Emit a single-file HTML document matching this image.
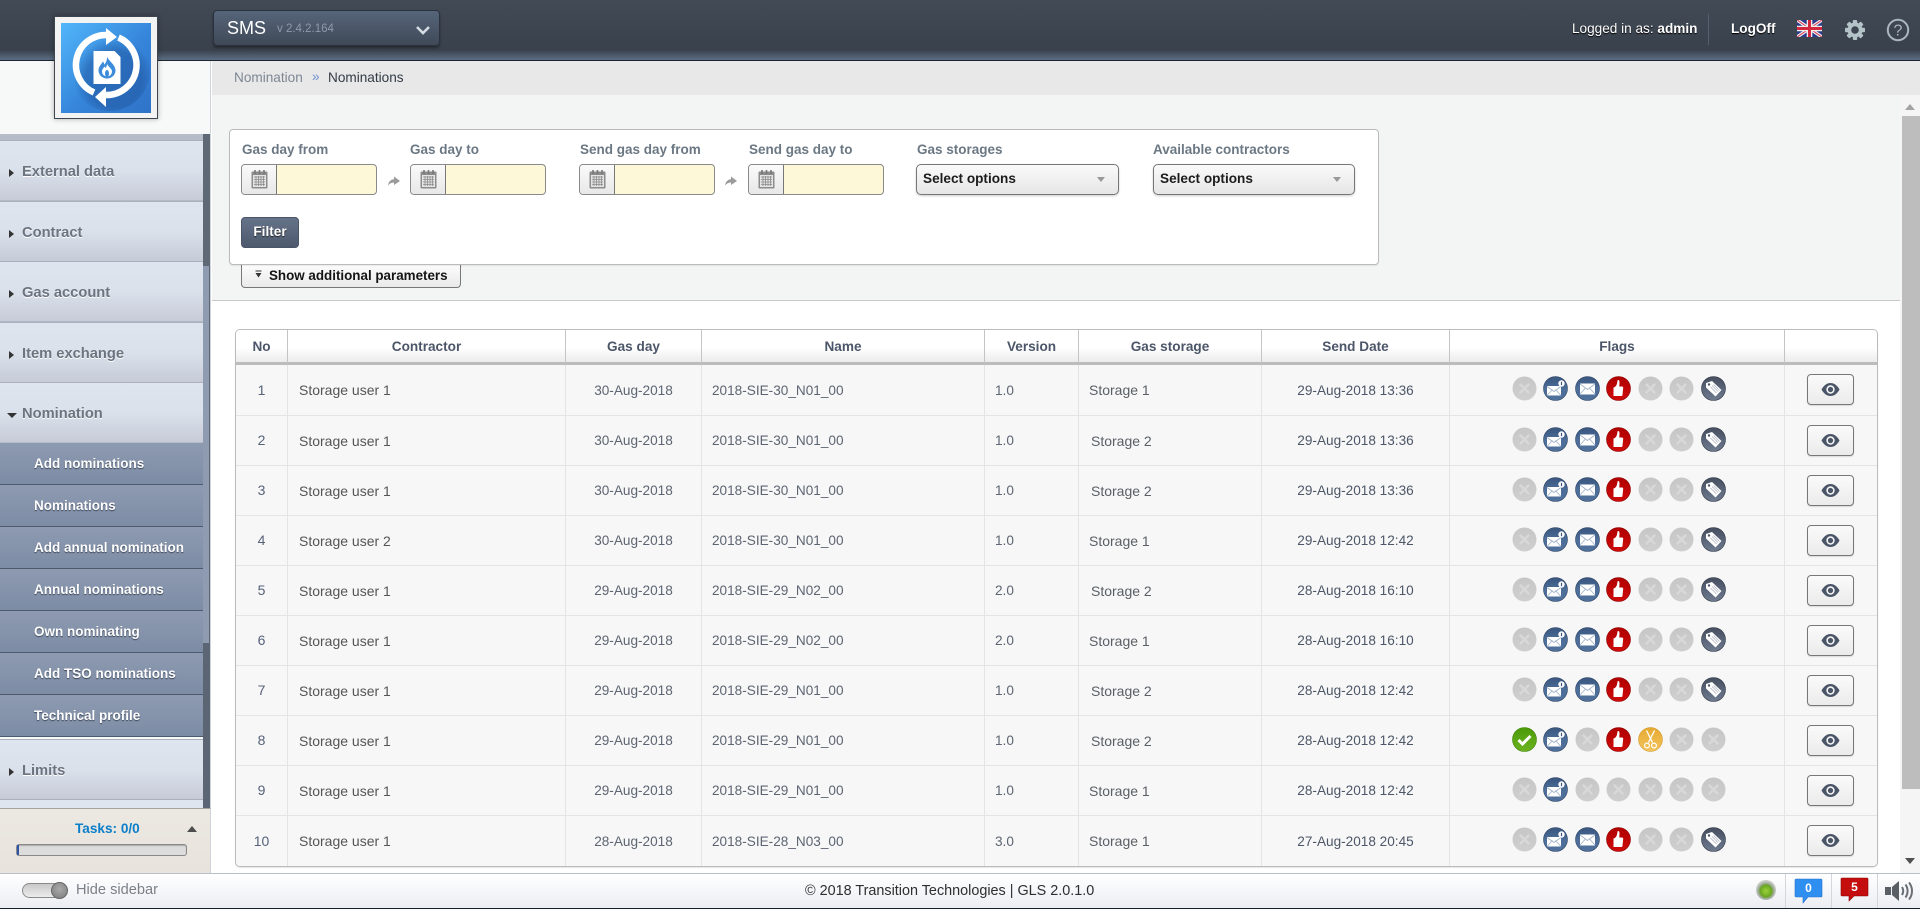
<!DOCTYPE html>
<html lang="en">
<head>
<meta charset="utf-8">
<title>SMS - Nominations</title>
<style>
*{box-sizing:border-box}
html,body{margin:0;padding:0;width:1920px;height:909px;overflow:hidden;background:#fff;font-family:"Liberation Sans",Arial,sans-serif;color:#555}
.a{position:absolute}
#hdr{left:0;top:0;width:1920px;height:61px;background:linear-gradient(#424a56 0,#39414c 50px,#5c6e84 60px,#5c6e84 60px);border-bottom:1px solid #1c2430}
#logo{left:54px;top:16px;width:104px;height:103px;background:#f3f3f3;border:1px solid #3d4551;box-shadow:0 0 5px rgba(0,0,0,.3);z-index:5}
#logo svg{position:absolute;left:6px;top:6px}
#sms{left:213px;top:10px;width:227px;height:36px;border-radius:4px;background:linear-gradient(#56657a,#3f4957);border:1px solid #2b323d;box-shadow:0 2px 2px rgba(0,0,0,.35)}
#sms b{position:absolute;left:13px;top:6px;font-weight:normal;font-size:18px;color:#fff;line-height:22px}
#sms i{position:absolute;left:63px;top:11px;font-style:normal;font-size:11.5px;color:#8e9aab;line-height:14px;white-space:nowrap}
.hw{color:#fff;font-size:13.6px;line-height:18px;white-space:nowrap;text-shadow:0 1px 1px #000}
#side{left:0;top:61px;width:211px;height:812px;background:#f7f8f8;border-right:1px solid #cfd4da}
#mtop{left:0;top:134px;width:203px;height:6px;background:#b6bdc9}
.m{position:absolute;left:0;width:203px;height:61px;background:linear-gradient(#dfe5ee 0,#dbe1eb 50%,#c6cbd7 100%);border-top:1px solid #aab1bd;border-bottom:1px solid #b5bbc6;font-weight:bold;font-size:14.7px;color:#6c7480;line-height:62px;padding-left:22px;text-shadow:0 1px 0 #fff}
.m:before{content:"";position:absolute;left:9px;top:28px;border-left:5px solid #333;border-top:4px solid transparent;border-bottom:4px solid transparent}
.m.o:before{left:7px;top:30px;border-top:5px solid #333;border-left:5px solid transparent;border-right:5px solid transparent;border-bottom:0}
.s{position:absolute;left:0;width:203px;height:42px;background:linear-gradient(#8d9ab1,#7d8ca5);border-bottom:1px solid #4d596d;color:#fff;font-weight:bold;font-size:13.5px;line-height:42px;padding-left:34px;text-shadow:0 1px 1px #3c4656;white-space:nowrap}
#sb1{left:203px;top:134px;width:7px;height:132px;background:#5f6875}
#sb2{left:203px;top:266px;width:7px;height:377px;background:#8f9bb0;border-right:1px solid #5d6674}
#sb3{left:203px;top:643px;width:7px;height:165px;background:#5b6573}
#tasks{left:0;top:808px;width:211px;height:65px;background:linear-gradient(#ece8e2,#e8e3dc);border-top:1px solid #a9a39b;border-right:1px solid #cfd4da}
#tasks b{position:absolute;left:75px;top:12px;font-size:13.6px;color:#0b7fc9;line-height:16px}
#tasks u{position:absolute;left:187px;top:17px;border-bottom:6px solid #4d4d4d;border-left:5px solid transparent;border-right:5px solid transparent}
#prog{position:absolute;left:16px;top:35px;width:171px;height:12px;background:#dcdcdc;border:1px solid #8b8985;border-radius:3px;box-shadow:inset 0 1px 1px #aaa}
#prog i{position:absolute;left:0;top:0;width:2px;height:10px;background:#2f55a8}
#bc{left:212px;top:61px;width:1708px;height:34px;background:#e8e8e8;font-size:13.6px;line-height:33px}
#main1{left:212px;top:95px;width:1688px;height:205px;background:#f3f5f4;border-bottom:0}
#line{left:212px;top:300px;width:1688px;height:1px;background:#c8c8c8}
#main2{left:212px;top:301px;width:1688px;height:572px;background:#fff}
#scr{left:1900px;top:95px;width:20px;height:778px;background:#f5f5f5}
#thumb{left:1902px;top:116px;width:18px;height:673px;background:#bdbdbd}
#panel{left:229px;top:129px;width:1150px;height:136px;background:#fff;border:1px solid #bbb;border-radius:4px;z-index:2;box-shadow:0 1px 1px rgba(0,0,0,.08)}
.lb{position:absolute;top:141px;font-weight:bold;font-size:13.5px;line-height:18px;color:#6b7883;white-space:nowrap;z-index:3}
.dt{position:absolute;top:164px;height:31px;background:#fdf8d8;border:1px solid #8a8a8a;border-radius:4px;z-index:3;overflow:hidden}
.dt span{position:absolute;left:0;top:0;width:35px;height:29px;background:linear-gradient(#fafafa,#e8e8e8);border-right:1px solid #777}
.dt svg{position:absolute;left:9px;top:4px}
.ar{position:absolute;top:176px;z-index:3}
.sel{position:absolute;top:164px;height:31px;border:1px solid #777;border-radius:5px;background:linear-gradient(#fafafa,#e6e6e6);font-weight:bold;font-size:13.6px;color:#1c1c1c;line-height:27px;padding-left:6px;z-index:3;box-shadow:0 1px 2px rgba(0,0,0,.2)}
.sel:after{content:"";position:absolute;right:13px;top:12px;border-top:5px solid #999;border-left:4.5px solid transparent;border-right:4.5px solid transparent}
#flt{left:241px;top:217px;width:58px;height:31px;border-radius:4px;background:linear-gradient(#657389,#4d596d);border:1px solid #4a5568;color:#fff;font-weight:bold;font-size:13.6px;line-height:27px;text-align:center;z-index:3;text-shadow:0 1px 1px #222}
#more{left:241px;top:264px;width:220px;height:24px;background:linear-gradient(#fdfdfd,#eaeaea);border:1px solid #777;border-top:0;border-radius:0 0 4px 4px;font-weight:bold;font-size:13.4px;color:#151515;line-height:23px;padding-left:27px;white-space:nowrap;z-index:1}
#more svg{position:absolute;left:12px;top:6px}
#tw{left:235px;top:329px;width:1643px;height:538px;border:1px solid #bbb;border-radius:5px;overflow:hidden;background:#f7f7f7;box-shadow:0 1px 1px rgba(0,0,0,.1)}
table{border-collapse:separate;border-spacing:0;table-layout:fixed;width:1641px}
th{height:35px;padding:0;background:linear-gradient(#fff 0,#fff 55%,#ececec 100%);border-right:1px solid #c4c4c4;border-bottom:3px solid #bcbcbc;font-size:13.6px;font-weight:bold;color:#4c5669;text-align:center}
td{height:50px;padding:0;background:#f7f7f7;border-right:1px solid #e4e4e4;border-bottom:1px solid #e4e4e4;font-size:13.6px;color:#5d6572;position:relative;white-space:nowrap}
tr.r1 td{height:51px}
tr:last-child td{border-bottom:0}
th:last-child,td:last-child{border-right:0}
.c{text-align:center}
.no{text-align:center;font-size:14px;color:#56627a;padding-bottom:1px}
.cn{padding-left:11px;font-size:14px;color:#555}
.p{padding-left:10px}
.st{padding-left:10px;font-size:14px;color:#5a5f66}
.st2{padding-left:12px}
.sd{text-align:center;color:#4d5768}
.f{position:absolute;top:11px;width:25px;height:25px}
.f1{left:61.5px}.f2{left:93px}.f3{left:125px}.f4{left:156px}.f5{left:187.5px}.f6{left:218.5px}.f7{left:250.5px}
.eye{position:absolute;left:22px;top:9px;width:47px;height:31px;border:1px solid #777;border-radius:4px;background:linear-gradient(#fafafa,#ebebeb);box-shadow:0 1px 1px rgba(0,0,0,.12)}
.eye svg{position:absolute;left:13px;top:7px}
#ftr{left:0;top:873px;width:1920px;height:36px;background:linear-gradient(#fff,#eceef3);border-top:1px solid #b7bfca;border-bottom:1px solid #14202a}
#tog{position:absolute;left:22px;top:9px;width:45px;height:15px;border-radius:8px;background:linear-gradient(#c9c9c9,#ececec);border:1px solid #8a8a8a}
#tog i{position:absolute;right:-2px;top:-2px;width:17px;height:17px;border-radius:50%;background:radial-gradient(circle at 50% 40%,#a9a9a9,#7c7c7c);border:1px solid #666}
#hs{position:absolute;left:76px;top:7px;font-size:14.6px;line-height:18px;color:#7b8088}
#cp{position:absolute;left:805px;top:8px;font-size:14.4px;line-height:18px;color:#2f2f2f;white-space:nowrap}
.dv{position:absolute;top:0;width:1px;height:34px;background:#d3d6db}
</style>
</head>
<body>
<svg width="0" height="0" style="position:absolute">
<defs>
<linearGradient id="gg" x1="0" y1="0" x2="0" y2="1"><stop offset="0" stop-color="#c6c6c6"/><stop offset="1" stop-color="#cfcfcf"/></linearGradient>
<linearGradient id="gb" x1="0" y1="0" x2="0" y2="1"><stop offset="0" stop-color="#38557d"/><stop offset=".5" stop-color="#4c6d98"/><stop offset="1" stop-color="#4f719c"/></linearGradient>
<linearGradient id="gr" x1="0" y1="0" x2="0" y2="1"><stop offset="0" stop-color="#b00000"/><stop offset="1" stop-color="#cf0b0b"/></linearGradient>
<linearGradient id="gt" x1="0" y1="0" x2="0" y2="1"><stop offset="0" stop-color="#454e5f"/><stop offset="1" stop-color="#6f7b90"/></linearGradient>
<linearGradient id="gv" x1="0" y1="0" x2="0" y2="1"><stop offset="0" stop-color="#4b9a08"/><stop offset="1" stop-color="#6cb321"/></linearGradient>
<linearGradient id="gy" x1="0" y1="0" x2="0" y2="1"><stop offset="0" stop-color="#e6a92f"/><stop offset="1" stop-color="#f3c45e"/></linearGradient>
<symbol id="g" viewBox="0 0 25 25"><circle cx="12.5" cy="12.5" r="12" fill="url(#gg)"/><path d="M8.500 8.500l8 8M16.500 8.500l-8 8" stroke="#d8d8d8" stroke-width="2.400" stroke-linecap="round"/></symbol>
<symbol id="mi" viewBox="0 0 25 25"><circle cx="12.5" cy="12.5" r="12" fill="url(#gb)" stroke="#2f4666" stroke-width=".6"/><rect x="4" y="10" width="14" height="9.500" fill="#fff"/><path d="M4 10.500l7 5 7-5M4 19.500l5.500-6M18 19.500l-5.500-6" fill="none" stroke="#9db0c8" stroke-width=".8"/><circle cx="18.500" cy="7.500" r="3.200" fill="#fff"/><path d="M18.500 5.800v3.400" stroke="#3b5680" stroke-width="1.200"/></symbol>
<symbol id="m" viewBox="0 0 25 25"><circle cx="12.5" cy="12.5" r="12" fill="url(#gb)" stroke="#2f4666" stroke-width=".6"/><rect x="5" y="7.500" width="15" height="11" fill="#fff"/><path d="M5 8l7.500 5.500L20 8M5 18l5.500-6M20 18l-5.500-6" fill="none" stroke="#9db0c8" stroke-width=".8"/></symbol>
<symbol id="r" viewBox="0 0 25 25"><circle cx="12.5" cy="12.5" r="12" fill="url(#gr)" stroke="#8c0000" stroke-width=".6"/><path d="M7.500 11.500c2-.5 3-2 3.500-4l.7-3.500c1.200-.3 1.800.8 1.800 2l-.2 4.500h2.700c.8 0 1.200.5 1.200 1.300l-.7 7c-.1.900-.5 1.200-1.300 1.200h-7.700z" fill="#fff"/></symbol>
<symbol id="t" viewBox="0 0 25 25"><circle cx="12.5" cy="12.5" r="12" fill="url(#gt)" stroke="#2e3542" stroke-width=".6"/><path d="M5 7l6-2 9.500 9-6 6.500-9.500-9z" fill="#fff"/><circle cx="8" cy="8.500" r="1.200" fill="#4a5568"/><path d="M11 9.500l6 6M9.500 11l6 6M12.500 8.500l6 6" stroke="#b0b6c0" stroke-width=".8"/></symbol>
<symbol id="v" viewBox="0 0 25 25"><circle cx="12.5" cy="12.5" r="12" fill="url(#gv)" stroke="#3f8205" stroke-width=".6"/><path d="M6.500 13l4 4 8-8" fill="none" stroke="#fff" stroke-width="3"/></symbol>
<symbol id="y" viewBox="0 0 25 25"><circle cx="12.5" cy="12.5" r="12" fill="url(#gy)" stroke="#c88f22" stroke-width=".5"/><path d="M8.500 3.500l6 12M16.500 3.500l-6 12" stroke="#fff" stroke-width="1.300"/><circle cx="9" cy="18.500" r="2.400" fill="none" stroke="#fff" stroke-width="1.200"/><circle cx="16" cy="18.500" r="2.400" fill="none" stroke="#fff" stroke-width="1.200"/></symbol>
<symbol id="e" viewBox="0 0 19 15"><path d="M.5 7.500C3 3 6 1 9.500 1s6.500 2 9 6.500c-2.500 4.500-5.500 6.500-9 6.500S3 12 .5 7.500z" fill="#4b5568"/><circle cx="9.500" cy="7.500" r="4.200" fill="#f3f3f3"/><circle cx="9.500" cy="7.500" r="2.600" fill="#4b5568"/></symbol>
<symbol id="cal" viewBox="0 0 17 20"><rect x="0.500" y="2.500" width="16" height="17" rx="1" fill="#8c8c8c"/><rect x="2" y="6" width="13" height="12" fill="#e4e4e4"/><path d="M4 1v4M8.500 1v4M13 1v4" stroke="#777" stroke-width="1.600"/><path d="M3 8h11M3 10.500h11M3 13h11M3 15.500h11M5 7v10M7.500 7v10M10 7v10M12.500 7v10" stroke="#8a8a8a" stroke-width=".8"/></symbol>
<symbol id="arw" viewBox="0 0 12 10"><path d="M0 9.500C.5 6 2.500 3.500 6 3.300V.5L12 5 6 9V6.500C3.500 6.500 1.500 7.500 0 9.500z" fill="#9a9a9a"/></symbol>
</defs>
</svg>

<div class="a" id="hdr"></div>
<div class="a" id="sms"><b>SMS</b><i>v 2.4.2.164</i>
<svg class="a" style="left:201px;top:14px" width="16" height="11" viewBox="0 0 16 11"><path d="M2 2l6 6 6-6" fill="none" stroke="#d5dbe2" stroke-width="2.600"/></svg></div>
<div class="a hw" style="left:1572px;top:20px">Logged in as: <b>admin</b></div>
<div class="a" style="left:1708px;top:14px;width:1px;height:31px;background:#55606e"></div>
<div class="a hw" style="left:1731px;top:20px;font-weight:bold">LogOff</div>
<svg class="a" style="left:1797px;top:20px" width="25" height="17" viewBox="0 0 25 17"><rect width="25" height="17" fill="#2b3a8c"/><path d="M0 0l25 17M25 0L0 17" stroke="#eee" stroke-width="3.400"/><path d="M0 0l25 17M25 0L0 17" stroke="#d8425a" stroke-width="1.100"/><path d="M12.500 0v17M0 8.500h25" stroke="#eee" stroke-width="5.600"/><path d="M12.500 0v17M0 8.500h25" stroke="#d4283f" stroke-width="3"/></svg>
<svg class="a" style="left:1844px;top:19px" width="22" height="22" viewBox="0 0 22 22"><g fill="#b3c3c7"><circle cx="11" cy="11" r="7.500"/><rect x="8.800" y="1" width="4.400" height="20" rx="1"/><rect x="8.800" y="1" width="4.400" height="20" rx="1" transform="rotate(45 11 11)"/><rect x="8.800" y="1" width="4.400" height="20" rx="1" transform="rotate(90 11 11)"/><rect x="8.800" y="1" width="4.400" height="20" rx="1" transform="rotate(135 11 11)"/></g><circle cx="11" cy="11" r="3.800" fill="#3d4551"/></svg>
<svg class="a" style="left:1886px;top:18px" width="24" height="24" viewBox="0 0 24 24"><circle cx="12" cy="12" r="10.200" fill="none" stroke="#aab7bd" stroke-width="2"/><text x="12" y="17.500" text-anchor="middle" font-family="Liberation Sans" font-size="16" fill="#aab7bd">?</text></svg>

<div class="a" id="side"></div>
<div class="a" id="logo"><svg width="90" height="90" viewBox="0 0 90 90">
<defs><linearGradient id="lg" x1="0" y1="0" x2="1" y2="1"><stop offset="0" stop-color="#52b6fa"/><stop offset=".55" stop-color="#3585da"/><stop offset="1" stop-color="#2f73c8"/></linearGradient>
<radialGradient id="ls" cx=".55" cy=".6" r=".5"><stop offset=".7" stop-color="#1d4f96" stop-opacity=".45"/><stop offset="1" stop-color="#1d4f96" stop-opacity="0"/></radialGradient></defs>
<rect width="90" height="90" fill="url(#lg)"/><circle cx="49" cy="48" r="40" fill="url(#ls)"/>
<g fill="none" stroke="#fff" stroke-width="6.500"><path d="M33 69.500A30 30 0 0 1 46 12"/><path d="M57.500 14.500A30 30 0 0 1 45 72"/></g>
<path d="M45 5l11 9-11 8zM45 64L34 74l11 10z" fill="#fff"/>
<path d="M32.500 28h21l6 6v27h-27z" fill="#fff"/>
<path d="M46 33.500c1.500 4.500 8.500 8 8.500 14a8.500 8 0 0 1-17 0c0-4 3-6.500 4.500-9 .8 1 1.300 2 1.300 3.200 1.800-2 3-5 2.700-8.200z" fill="#3d8cdc"/>
<path d="M46 41c1 2.500 5 4.500 5 7.500a5 5 0 0 1-10 0c0-2 1.500-3.500 2.500-5 .5.500 1 1 1 1.800.8-1 1.500-2.800 1.500-4.300z" fill="#fff"/>
<ellipse cx="46" cy="50.500" rx="2" ry="3.500" fill="#3d8cdc"/>
</svg></div>

<div class="a" id="mtop"></div>
<div class="m" style="top:140px">External data</div>
<div class="m" style="top:201px">Contract</div>
<div class="m" style="top:261px">Gas account</div>
<div class="m" style="top:322px">Item exchange</div>
<div class="m o" style="top:382px">Nomination</div>
<div class="s" style="top:443px">Add nominations</div>
<div class="s" style="top:485px">Nominations</div>
<div class="s" style="top:527px">Add annual nomination</div>
<div class="s" style="top:569px">Annual nominations</div>
<div class="s" style="top:611px">Own nominating</div>
<div class="s" style="top:653px">Add TSO nominations</div>
<div class="s" style="top:695px">Technical profile</div>
<div class="m" style="top:739px">Limits</div>
<div class="m" style="top:799px;height:10px;background:#dfe5ee;line-height:0"></div>
<div class="a" id="sb1"></div><div class="a" id="sb2"></div><div class="a" id="sb3"></div>
<div class="a" id="tasks"><b>Tasks: 0/0</b><u></u><div id="prog"><i></i></div></div>

<div class="a" id="bc"><span style="position:absolute;left:22px;color:#7d8794">Nomination</span><span style="position:absolute;left:100px;top:-1px;color:#6f8fd0">»</span><span style="position:absolute;left:116px;color:#333c47">Nominations</span></div>
<div class="a" id="main1"></div>
<div class="a" id="line"></div>
<div class="a" id="main2"></div>
<div class="a" id="scr"></div><div class="a" id="thumb"></div>
<div class="a" style="left:1905px;top:104px;border-bottom:6px solid #a3a3a3;border-left:5px solid transparent;border-right:5px solid transparent"></div>
<div class="a" style="left:1905px;top:858px;border-top:6px solid #505050;border-left:5px solid transparent;border-right:5px solid transparent"></div>

<div class="a" id="panel"></div>
<div class="lb" style="left:242px">Gas day from</div>
<div class="lb" style="left:410px">Gas day to</div>
<div class="lb" style="left:580px">Send gas day from</div>
<div class="lb" style="left:749px">Send gas day to</div>
<div class="lb" style="left:917px">Gas storages</div>
<div class="lb" style="left:1153px">Available contractors</div>
<div class="dt" style="left:241px;width:136px"><span><svg width="17" height="20"><use href="#cal"/></svg></span></div>
<div class="dt" style="left:410px;width:136px"><span><svg width="17" height="20"><use href="#cal"/></svg></span></div>
<div class="dt" style="left:579px;width:136px"><span><svg width="17" height="20"><use href="#cal"/></svg></span></div>
<div class="dt" style="left:748px;width:136px"><span><svg width="17" height="20"><use href="#cal"/></svg></span></div>
<svg class="ar" style="left:388px" width="12" height="10"><use href="#arw"/></svg>
<svg class="ar" style="left:725px" width="12" height="10"><use href="#arw"/></svg>
<div class="sel" style="left:916px;width:203px">Select options</div>
<div class="sel" style="left:1153px;width:202px">Select options</div>
<div class="a" id="flt">Filter</div>
<div class="a" id="more"><svg width="9" height="9" viewBox="0 0 9 9"><path d="M1.500 .5h6v1h-6zM1.500 3h6L4.500 7.500z" fill="#333"/></svg>Show additional parameters</div>

<div class="a" id="tw"><table>
<colgroup><col style="width:52px"><col style="width:278px"><col style="width:136px"><col style="width:283px"><col style="width:94px"><col style="width:183px"><col style="width:188px"><col style="width:335px"><col style="width:92px"></colgroup>
<thead><tr><th>No</th><th>Contractor</th><th>Gas day</th><th>Name</th><th>Version</th><th>Gas storage</th><th>Send Date</th><th>Flags</th><th></th></tr></thead>
<tbody>
<tr class="r1"><td class="no">1</td><td class="cn">Storage user 1</td><td class="c">30-Aug-2018</td><td class="p">2018-SIE-30_N01_00</td><td class="p">1.0</td><td class="st">Storage 1</td><td class="sd">29-Aug-2018 13:36</td><td><svg class="f f1"><use href="#g"/></svg><svg class="f f2"><use href="#mi"/></svg><svg class="f f3"><use href="#m"/></svg><svg class="f f4"><use href="#r"/></svg><svg class="f f5"><use href="#g"/></svg><svg class="f f6"><use href="#g"/></svg><svg class="f f7"><use href="#t"/></svg></td><td><div class="eye"><svg width="19" height="15"><use href="#e"/></svg></div></td></tr>
<tr><td class="no">2</td><td class="cn">Storage user 1</td><td class="c">30-Aug-2018</td><td class="p">2018-SIE-30_N01_00</td><td class="p">1.0</td><td class="st st2">Storage 2</td><td class="sd">29-Aug-2018 13:36</td><td><svg class="f f1"><use href="#g"/></svg><svg class="f f2"><use href="#mi"/></svg><svg class="f f3"><use href="#m"/></svg><svg class="f f4"><use href="#r"/></svg><svg class="f f5"><use href="#g"/></svg><svg class="f f6"><use href="#g"/></svg><svg class="f f7"><use href="#t"/></svg></td><td><div class="eye"><svg width="19" height="15"><use href="#e"/></svg></div></td></tr>
<tr><td class="no">3</td><td class="cn">Storage user 1</td><td class="c">30-Aug-2018</td><td class="p">2018-SIE-30_N01_00</td><td class="p">1.0</td><td class="st st2">Storage 2</td><td class="sd">29-Aug-2018 13:36</td><td><svg class="f f1"><use href="#g"/></svg><svg class="f f2"><use href="#mi"/></svg><svg class="f f3"><use href="#m"/></svg><svg class="f f4"><use href="#r"/></svg><svg class="f f5"><use href="#g"/></svg><svg class="f f6"><use href="#g"/></svg><svg class="f f7"><use href="#t"/></svg></td><td><div class="eye"><svg width="19" height="15"><use href="#e"/></svg></div></td></tr>
<tr><td class="no">4</td><td class="cn">Storage user 2</td><td class="c">30-Aug-2018</td><td class="p">2018-SIE-30_N01_00</td><td class="p">1.0</td><td class="st">Storage 1</td><td class="sd">29-Aug-2018 12:42</td><td><svg class="f f1"><use href="#g"/></svg><svg class="f f2"><use href="#mi"/></svg><svg class="f f3"><use href="#m"/></svg><svg class="f f4"><use href="#r"/></svg><svg class="f f5"><use href="#g"/></svg><svg class="f f6"><use href="#g"/></svg><svg class="f f7"><use href="#t"/></svg></td><td><div class="eye"><svg width="19" height="15"><use href="#e"/></svg></div></td></tr>
<tr><td class="no">5</td><td class="cn">Storage user 1</td><td class="c">29-Aug-2018</td><td class="p">2018-SIE-29_N02_00</td><td class="p">2.0</td><td class="st st2">Storage 2</td><td class="sd">28-Aug-2018 16:10</td><td><svg class="f f1"><use href="#g"/></svg><svg class="f f2"><use href="#mi"/></svg><svg class="f f3"><use href="#m"/></svg><svg class="f f4"><use href="#r"/></svg><svg class="f f5"><use href="#g"/></svg><svg class="f f6"><use href="#g"/></svg><svg class="f f7"><use href="#t"/></svg></td><td><div class="eye"><svg width="19" height="15"><use href="#e"/></svg></div></td></tr>
<tr><td class="no">6</td><td class="cn">Storage user 1</td><td class="c">29-Aug-2018</td><td class="p">2018-SIE-29_N02_00</td><td class="p">2.0</td><td class="st">Storage 1</td><td class="sd">28-Aug-2018 16:10</td><td><svg class="f f1"><use href="#g"/></svg><svg class="f f2"><use href="#mi"/></svg><svg class="f f3"><use href="#m"/></svg><svg class="f f4"><use href="#r"/></svg><svg class="f f5"><use href="#g"/></svg><svg class="f f6"><use href="#g"/></svg><svg class="f f7"><use href="#t"/></svg></td><td><div class="eye"><svg width="19" height="15"><use href="#e"/></svg></div></td></tr>
<tr><td class="no">7</td><td class="cn">Storage user 1</td><td class="c">29-Aug-2018</td><td class="p">2018-SIE-29_N01_00</td><td class="p">1.0</td><td class="st st2">Storage 2</td><td class="sd">28-Aug-2018 12:42</td><td><svg class="f f1"><use href="#g"/></svg><svg class="f f2"><use href="#mi"/></svg><svg class="f f3"><use href="#m"/></svg><svg class="f f4"><use href="#r"/></svg><svg class="f f5"><use href="#g"/></svg><svg class="f f6"><use href="#g"/></svg><svg class="f f7"><use href="#t"/></svg></td><td><div class="eye"><svg width="19" height="15"><use href="#e"/></svg></div></td></tr>
<tr><td class="no">8</td><td class="cn">Storage user 1</td><td class="c">29-Aug-2018</td><td class="p">2018-SIE-29_N01_00</td><td class="p">1.0</td><td class="st st2">Storage 2</td><td class="sd">28-Aug-2018 12:42</td><td><svg class="f f1"><use href="#v"/></svg><svg class="f f2"><use href="#mi"/></svg><svg class="f f3"><use href="#g"/></svg><svg class="f f4"><use href="#r"/></svg><svg class="f f5"><use href="#y"/></svg><svg class="f f6"><use href="#g"/></svg><svg class="f f7"><use href="#g"/></svg></td><td><div class="eye"><svg width="19" height="15"><use href="#e"/></svg></div></td></tr>
<tr><td class="no">9</td><td class="cn">Storage user 1</td><td class="c">29-Aug-2018</td><td class="p">2018-SIE-29_N01_00</td><td class="p">1.0</td><td class="st">Storage 1</td><td class="sd">28-Aug-2018 12:42</td><td><svg class="f f1"><use href="#g"/></svg><svg class="f f2"><use href="#mi"/></svg><svg class="f f3"><use href="#g"/></svg><svg class="f f4"><use href="#g"/></svg><svg class="f f5"><use href="#g"/></svg><svg class="f f6"><use href="#g"/></svg><svg class="f f7"><use href="#g"/></svg></td><td><div class="eye"><svg width="19" height="15"><use href="#e"/></svg></div></td></tr>
<tr><td class="no">10</td><td class="cn">Storage user 1</td><td class="c">28-Aug-2018</td><td class="p">2018-SIE-28_N03_00</td><td class="p">3.0</td><td class="st">Storage 1</td><td class="sd">27-Aug-2018 20:45</td><td><svg class="f f1"><use href="#g"/></svg><svg class="f f2"><use href="#mi"/></svg><svg class="f f3"><use href="#m"/></svg><svg class="f f4"><use href="#r"/></svg><svg class="f f5"><use href="#g"/></svg><svg class="f f6"><use href="#g"/></svg><svg class="f f7"><use href="#t"/></svg></td><td><div class="eye"><svg width="19" height="15"><use href="#e"/></svg></div></td></tr>
</tbody></table></div>

<div class="a" id="ftr">
<div id="tog"><i></i></div><div id="hs">Hide sidebar</div>
<div id="cp">© 2018 Transition Technologies | GLS 2.0.1.0</div>
<svg class="a" style="left:1755px;top:5px" width="22" height="22" viewBox="0 0 22 22"><defs><radialGradient id="led" cx=".5" cy=".55" r=".5"><stop offset="0" stop-color="#9bd33a"/><stop offset=".6" stop-color="#6aa523"/><stop offset=".75" stop-color="#9aa895"/><stop offset="1" stop-color="#c9cdc6"/></radialGradient></defs><circle cx="11" cy="11" r="10" fill="url(#led)"/></svg>
<div class="dv" style="left:1785px"></div><div class="dv" style="left:1831px"></div><div class="dv" style="left:1877px"></div>
<svg class="a" style="left:1794px;top:4px" width="29" height="26" viewBox="0 0 29 26"><path d="M2 1h25a1 1 0 0 1 1 1v16a1 1 0 0 1-1 1H14l-5 6v-6H2a1 1 0 0 1-1-1V2a1 1 0 0 1 1-1z" fill="#2f8ff0" stroke="#2874cc" stroke-width=".6"/><text x="14.500" y="14" text-anchor="middle" font-family="Liberation Sans" font-size="12" font-weight="bold" fill="#fff">0</text></svg>
<svg class="a" style="left:1840px;top:3px" width="29" height="26" viewBox="0 0 29 26"><path d="M2 1h25a1 1 0 0 1 1 1v16a1 1 0 0 1-1 1H14l-5 5v-5H2a1 1 0 0 1-1-1V2a1 1 0 0 1 1-1z" fill="#c40d0d" stroke="#8e0505" stroke-width=".6"/><text x="14.500" y="14" text-anchor="middle" font-family="Liberation Sans" font-size="12" font-weight="bold" fill="#fff">5</text></svg>
<svg class="a" style="left:1884px;top:6px" width="30" height="22" viewBox="0 0 30 22"><path d="M1 7h6v8H1zM8 7l7-6v20l-7-6z" fill="#5a5f66"/><path d="M18 7c1.500 2.500 1.500 5.500 0 8M21.500 4.500c2.800 4 2.800 9 0 13M25 2.500c4 5 4 12 0 17" fill="none" stroke="#6a6f76" stroke-width="2"/></svg>
</div>
</body>
</html>
